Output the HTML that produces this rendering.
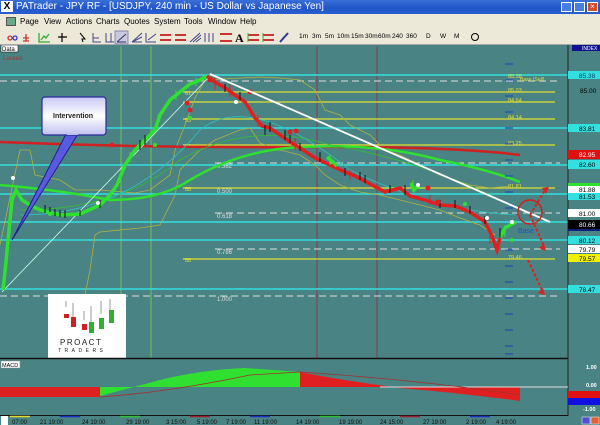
<!DOCTYPE html>
<html><head><meta charset="utf-8"><style>
*{margin:0;padding:0;box-sizing:border-box}
body{width:600px;height:425px;overflow:hidden;background:#4a8383;font-family:"Liberation Sans",sans-serif;position:relative}
.title{position:absolute;left:0;top:0;width:600px;height:14px;background:linear-gradient(#3a6fd8,#1f55c8 60%,#2a5fd0);color:#fff;font-size:10px;line-height:14px;padding-left:16px}
.menu{position:absolute;left:0;top:14px;width:600px;height:15px;background:#ece9d8;font-size:8px;line-height:15px}
.menu span{position:absolute;top:0}
.tool{position:absolute;left:0;top:29px;width:600px;height:16px;background:#ece9d8;border-bottom:1px solid #aaa;font-size:6.5px;line-height:16px}
.tool span{position:absolute;top:0}
</style></head><body>
<div class="title">PATrader - JPY RF - [USDJPY, 240 min - US Dollar vs Japanese Yen]</div>
<div style="position:absolute;left:1px;top:1px;width:12px;height:11px;background:#fff;color:#000;font:bold 10px 'Liberation Sans';text-align:center;line-height:11px">X</div>
<div style="position:absolute;left:561px;top:2px;width:11px;height:10px;background:#4a7de0;border:1px solid #fff"></div>
<div style="position:absolute;left:574px;top:2px;width:11px;height:10px;background:#4a7de0;border:1px solid #fff"></div>
<div style="position:absolute;left:587px;top:2px;width:11px;height:10px;background:#d0502a;border:1px solid #fff;color:#fff;font-size:8px;line-height:8px;text-align:center">×</div>
<div class="menu">
<div style="position:absolute;left:6px;top:3px;width:10px;height:9px;background:#6a8;border:1px solid #555"></div>
<span style="left:20px">Page</span><span style="left:44px">View</span><span style="left:66px">Actions</span><span style="left:96px">Charts</span><span style="left:124px">Quotes</span><span style="left:154px">System</span><span style="left:184px">Tools</span><span style="left:208px">Window</span><span style="left:240px">Help</span>
</div>
<div class="tool">
<svg width="300" height="16" style="position:absolute;left:0;top:0">
<g stroke="#c33" fill="none" stroke-width="1.3"><circle cx="10" cy="9" r="2"/><circle cx="15" cy="9" r="2" stroke="#33c"/><path d="M26 5v7M23 9h6M23 12h6"/></g>
<path d="M39 4v9h11M41 11l3-4 2 2 3-4" stroke="#3a3" fill="none" stroke-width="1.3"/>
<path d="M62 4v9M58 8h9" stroke="#000" stroke-width="1.2"/>
<path d="M80 4l5 6h-3l1 3" stroke="#000" fill="none"/>
<g stroke="#448" fill="none"><path d="M93 4v9h8M93 9h6"/><path d="M106 4v9h8M111 4v9"/></g>
<rect x="115" y="2" width="13" height="13" fill="#c8c8e0" stroke="#88a"/><path d="M117 13l9-8M117 13h9" stroke="#336" fill="none"/>
<g stroke="#448" fill="none"><path d="M132 13l10-9M132 13h10M132 13l10-5"/><path d="M146 4v9h10M148 11l8-6"/></g>
<g stroke="#c33" stroke-width="2"><path d="M160 6h11M160 11h11"/><path d="M175 6h11M175 11h11"/></g>
<path d="M190 13l10-9M193 13l8-7M196 13l5-4" stroke="#448" fill="none"/>
<path d="M205 4v9M209 4v9M213 4v9" stroke="#448"/>
<path d="M220 5h12M220 12h12" stroke="#c33" stroke-width="2"/>
<text x="235" y="13" font-size="12" font-weight="bold" font-family="Liberation Serif">A</text>
<path d="M248 6h11M248 11h11" stroke="#c33" stroke-width="2"/><path d="M248 4v9" stroke="#3a3"/>
<path d="M263 6h11M263 11h11" stroke="#c33" stroke-width="2"/><path d="M263 4v9" stroke="#3a3"/>
<path d="M280 13l8-9" stroke="#339" stroke-width="2"/>
</svg>
<span style="left:299px">1m</span><span style="left:312px">3m</span><span style="left:325px">5m</span><span style="left:337px">10m</span><span style="left:351px">15m</span><span style="left:365px">30m</span><span style="left:378px">60m</span><span style="left:392px">240</span><span style="left:406px">360</span><span style="left:426px">D</span><span style="left:440px">W</span><span style="left:454px">M</span>
<div style="position:absolute;left:471px;top:4px;width:8px;height:8px;border:1.5px solid #000;border-radius:50%"></div>
</div>

<svg width="600" height="380" viewBox="0 45 600 380" style="position:absolute;left:0;top:45px">
<rect x="0" y="45" width="600" height="380" fill="#4a8383"/>
<path d="M121 46V358M151 46V358" stroke="#7bd04a" stroke-width="0.8"/>
<path d="M317 46V358M377 46V358" stroke="#8a3a50" stroke-width="1"/>
<g stroke="#33e0e0" stroke-width="1.5"><path d="M0 75H568M0 128H568M0 165H568M0 194H568M0 222H568M0 240H568M0 289H568"/></g>
<g stroke="#ddd" stroke-width="1" stroke-dasharray="7 4"><path d="M0 81H560M215 163H560M215 213H560M215 249H560M0 296H560"/></g>
<g stroke="#e0e030" stroke-width="1.3"><path d="M183 92H555M183 102H555M183 119H555M183 145H555M183 188H555M183 259H555"/></g>
<g fill="#e0e030" font-size="5.5"><text x="185" y="95">61</text><text x="185" y="122">53</text><text x="185" y="148">51</text><text x="185" y="191">55</text><text x="185" y="262">58</text>
<text x="508" y="78">85.38</text><text x="508" y="92">85.03</text><text x="508" y="102">84.64</text><text x="508" y="119">84.14</text><text x="508" y="145">83.25</text><text x="508" y="188">81.81</text><text x="508" y="259">79.46</text></g>
<text x="520" y="81" fill="#e0e030" font-size="5">Base (Sell)</text>
<g fill="#ddd" font-size="6"><text x="217" y="168">0.382</text><text x="217" y="193">0.500</text><text x="217" y="218">0.618</text><text x="217" y="254">0.786</text><text x="217" y="301">1.000</text></g>
<path d="M0 245L20 150L30 150L35 175L60 180L75 190L100 190L135 193L150 190L170 175L175 150L185 125L195 98L205 80L260 77L280 78L300 80L315 90L325 110L340 115L350 125L370 135L385 150L400 155L420 165L440 175L455 180L470 185L490 188L510 186" stroke="#b0b040" fill="none" stroke-width="0.8"/>
<path d="M80 320L90 270L95 235L100 232L140 228L160 225L175 195L180 170L200 150L215 140L240 130L250 128L260 143L280 150L300 155L315 165L325 175L340 185L360 192L380 195L400 200L420 205L440 210L460 218L480 225L495 235" stroke="#b0b040" fill="none" stroke-width="0.8"/>
<path d="M0 142Q150 148 300 147T520 155" stroke="#d02020" fill="none" stroke-width="2.5"/>
<path d="M0 185Q60 190 110 200Q160 200 190 180Q240 150 300 147Q380 143 440 160Q490 170 520 182" stroke="#30e030" fill="none" stroke-width="2.5"/>
<path d="M20 210Q120 210 180 160Q250 120 330 145Q420 160 500 200" stroke="#30c030" fill="none" stroke-width="0.8"/>
<path d="M20 215Q130 215 200 130Q250 90 350 170Q430 210 515 215" stroke="#30c0c0" fill="none" stroke-width="0.8"/>
<path d="M2 292L210 76" stroke="#cfe" stroke-width="0.8"/>
<g fill="none" stroke-width="3.5">
<polyline stroke="#30e030" points="3,290 6,262 9,230 12,200 16,190 22,200 30,205 40,210 60,215 80,214 100,205 110,195 117,185 125,165 135,150 145,140 155,130 160,115 170,100 180,92 190,84 200,80 207,76"/>
<polyline stroke="#e02020" points="207,76 215,82 225,88 235,95 245,102 255,118 262,126 270,128 280,135 290,142 300,148 315,158 330,165 345,172 355,176 370,184 385,192 400,188 410,196 425,200 440,205 455,206 470,212 485,222 492,236 497,250 500,238"/>
<polyline stroke="#30e030" points="327,157 333,162 337,166" />
<polyline stroke="#30e030" points="411,183 414,190 418,186" />
<polyline stroke="#30e030" points="500,238 505,228 512,224 516,222"/>
</g>
<g stroke="#111" stroke-width="1"><path d="M45 205v8M50 207v8M55 209v7M60 210v7M65 210v8M80 210v6M100 200v8M140 140v10M145 135v10M265 125v10M270 122v10M285 130v10M290 135v8M360 172v8M365 175v8M405 185v10M440 200v8M455 200v8M500 228v10M505 226v10M225 84v8M240 92v8M300 143v8M320 152v10M345 168v8M390 185v8M470 206v8M485 216v8"/></g>
<g stroke="#30e030" stroke-width="1"><path d="M130 152v10M158 115v12M176 90v10M196 78v8M330 155v10M413 180v12M505 225v12"/></g>
<g stroke="#e02020" stroke-width="1"><path d="M215 78v12M230 85v12M258 115v12M295 138v12M350 170v10M430 195v10M490 228v16"/></g>
<g fill="#e02020"><circle cx="187" cy="103" r="2.5"/><circle cx="190" cy="110" r="2.5"/><circle cx="112" cy="145" r="2.5"/><circle cx="210" cy="80" r="2.5"/><circle cx="250" cy="92" r="2.5"/><circle cx="290" cy="132" r="2.5"/><circle cx="296" cy="131" r="2.5"/><circle cx="428" cy="188" r="2.5"/><circle cx="438" cy="202" r="2.5"/></g>
<g fill="#30e030"><circle cx="12" cy="198" r="2"/><circle cx="50" cy="214" r="2"/><circle cx="155" cy="145" r="2"/><circle cx="190" cy="118" r="2"/><circle cx="465" cy="204" r="2"/><circle cx="512" cy="240" r="2"/></g>
<g fill="#fff"><circle cx="13" cy="178" r="2"/><circle cx="98" cy="203" r="2"/><circle cx="236" cy="102" r="2"/><circle cx="418" cy="185" r="2"/><circle cx="487" cy="218" r="2"/><circle cx="512" cy="222" r="2"/></g>
<path d="M210 74L550 222" stroke="#fff" stroke-width="1.8"/>
<text x="518" y="233" fill="#2050c0" font-size="7">Base</text>
<circle cx="530" cy="212" r="12" fill="none" stroke="#d02020" stroke-width="1.5"/>
<g stroke="#e02020" stroke-width="2" stroke-dasharray="3 2" fill="none"><path d="M530 215L545 190M530 215L544 246M528 260L542 290"/></g>
<g fill="#e02020"><path d="M549 187l-7 1 4 6z"/><path d="M546 251l-7-3 5-4z"/><path d="M545 295l-7-2 5-5z"/></g>
<g stroke="#1f3fc0" stroke-width="1"><path d="M505 64h8M505 80h8M505 96h8M505 112h8M505 128h8M505 144h8M505 160h8M505 176h8M505 192h8M505 208h8M505 250h8M505 266h8M505 282h8M505 298h8M505 314h8M505 330h8M505 346h8M505 354h8"/></g>
<path d="M568 45V416" stroke="#222" stroke-width="1"/>
<rect x="572" y="45" width="28" height="6" fill="#101090"/><text x="582" y="50" fill="#fff" font-size="5">INDEX</text>
<g font-size="6.5" font-family="Liberation Sans">
<rect x="568" y="71" width="32" height="8" fill="#33e0e0"/><text x="579" y="78" fill="#046">85.38</text>
<text x="580" y="93" fill="#000">85.00</text>
<rect x="568" y="124" width="32" height="8" fill="#33e0e0"/><text x="579" y="131">83.81</text>
<rect x="568" y="150" width="32" height="9" fill="#e01010"/><text x="579" y="157" fill="#fff">82.95</text>
<rect x="568" y="160" width="32" height="9" fill="#33e0e0"/><text x="579" y="167">82.60</text>
<rect x="568" y="183" width="32" height="3" fill="#30e030"/>
<rect x="568" y="186" width="32" height="7" fill="#fff"/><text x="579" y="192">81.88</text>
<rect x="568" y="193" width="32" height="7" fill="#33e0e0"/><text x="579" y="199">81.53</text>
<rect x="568" y="209" width="32" height="8" fill="#fff"/><text x="579" y="216">81.00</text>
<rect x="568" y="220" width="32" height="9" fill="#000"/><text x="579" y="227" fill="#fff">80.66</text><rect x="568" y="229" width="32" height="2" fill="#102080"/>
<rect x="568" y="236" width="32" height="8" fill="#33e0e0"/><text x="579" y="243">80.12</text>
<rect x="568" y="245" width="32" height="8" fill="#fff"/><text x="579" y="252">79.79</text>
<rect x="568" y="254" width="32" height="8" fill="#f0f000"/><text x="579" y="261">79.57</text>
<rect x="568" y="285" width="32" height="8" fill="#33e0e0"/><text x="579" y="292">78.47</text>
</g>
<rect x="1" y="45" width="17" height="7" fill="#fff" stroke="#000" stroke-width="0.5"/><text x="2" y="51" font-size="6">Data</text>
<text x="3" y="60" fill="#a33" font-size="6">Locked</text>
<defs><linearGradient id="cg" x1="0" y1="0" x2="0" y2="1"><stop offset="0" stop-color="#c8c8f8"/><stop offset="0.5" stop-color="#fff"/><stop offset="1" stop-color="#c0c0f0"/></linearGradient></defs>
<path d="M66 134L12 240L78 134Z" fill="#5a5ae0" stroke="#20208a" stroke-width="1"/>
<rect x="42" y="97" width="64" height="38" rx="3" fill="url(#cg)" stroke="#2a2a9a" stroke-width="1.2"/>
<path d="M67 134L78 134" stroke="#c0c0f0" stroke-width="2"/>
<text x="53" y="118" font-size="7" font-weight="bold" fill="#222">Intervention</text>
<rect x="48" y="294" width="78" height="64" fill="#fff"/>
<g><path d="M66 301v6M73 303v14M84 311v9M91 306v17M101 301v13M110 299v15" stroke="#555" stroke-width="0.6"/>
<rect x="64" y="314" width="5" height="4" fill="#d02020"/><rect x="71" y="317" width="5" height="10" fill="#d02020"/><rect x="82" y="324" width="5" height="6" fill="#d02020"/><rect x="89" y="322" width="5" height="11" fill="#30b030"/><rect x="99" y="318" width="5" height="11" fill="#30b030"/><rect x="109" y="310" width="5" height="13" fill="#30b030"/></g>
<text x="60" y="345" font-size="8" letter-spacing="1.5" fill="#222">PROACT</text>
<text x="58" y="352" font-size="5" letter-spacing="3.5" fill="#222">TRADERS</text>
<path d="M0 358.5H568" stroke="#111" stroke-width="1.5"/>
<rect x="1" y="361" width="19" height="7" fill="#fff" stroke="#888" stroke-width="0.5"/><text x="2" y="367" font-size="5.5">MACD</text>
<path d="M0 387V397H100V387Z" fill="#e02020"/>
<path d="M100 387V396Q130 388 160 380Q200 370 245 368L300 372V387Z" fill="#30e030"/>
<path d="M300 372V387H520V401Q460 393 400 388Q340 380 300 372Z" fill="#e02020"/>
<path d="M380 387H568" stroke="#ddd" stroke-width="1"/>
<path d="M100 397Q170 392 250 375L300 372Q420 380 520 395" stroke="#a03030" fill="none" stroke-width="0.8"/>
<g font-size="5.5" fill="#fff" font-weight="bold"><text x="586" y="369">1.00</text><text x="586" y="387">0.00</text><text x="583" y="411">-1.00</text></g>
<rect x="568" y="391" width="32" height="7" fill="#e01010"/><rect x="568" y="398" width="32" height="7" fill="#1010e0"/>
<path d="M0 415.5H568" stroke="#111" stroke-width="1"/>
<rect x="0" y="416" width="600" height="9" fill="#4a8383"/>
<rect x="1" y="416" width="7" height="9" fill="#fff"/>
<g stroke-width="1.5"><path d="M10 416.5H30" stroke="#e0e030"/><path d="M60 416.5H80" stroke="#2030c0"/><path d="M120 416.5H140" stroke="#30c030"/><path d="M190 416.5H210" stroke="#a02030"/><path d="M250 416.5H270" stroke="#2030c0"/><path d="M320 416.5H340" stroke="#30c030"/><path d="M400 416.5H420" stroke="#a02030"/><path d="M470 416.5H490" stroke="#2030c0"/></g>
<g font-size="6" fill="#111"><text x="12" y="424">07:00</text><text x="40" y="424">21 19:00</text><text x="82" y="424">24 19:00</text><text x="126" y="424">29 19:00</text><text x="166" y="424">3 15:00</text><text x="197" y="424">5 19:00</text><text x="226" y="424">7 19:00</text><text x="254" y="424">11 19:00</text><text x="296" y="424">14 19:00</text><text x="339" y="424">19 19:00</text><text x="380" y="424">24 15:00</text><text x="423" y="424">27 19:00</text><text x="466" y="424">2 19:00</text><text x="496" y="424">4 19:00</text></g>
<rect x="582" y="417" width="8" height="7" fill="#5050d0" stroke="#fff" stroke-width="0.5"/><rect x="591" y="417" width="8" height="7" fill="#e06030" stroke="#fff" stroke-width="0.5"/>
</svg>
</body></html>
